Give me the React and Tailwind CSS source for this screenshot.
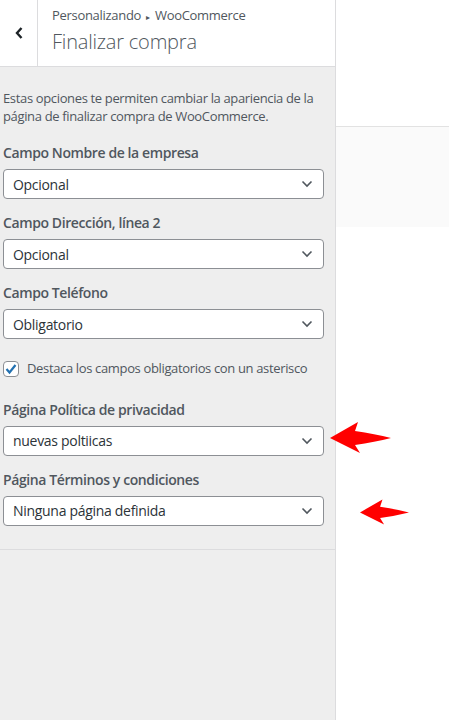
import React from 'react';

function Chevron() {
  return (
    <svg width="12" height="8" viewBox="0 0 12 8" className="shrink-0">
      <path d="M1.5 1.5 L6 6 L10.5 1.5" fill="none" stroke="#50575e" strokeWidth="1.6" />
    </svg>
  );
}

function SelectField({ label, value }) {
  return (
    <div className="flex flex-col">
      <div className="text-[14px] leading-[20px] font-semibold text-[#50575e] tracking-[-0.4px]">{label}</div>
      <div className="mt-[6px] w-[321px] h-[30px] bg-white border border-[#8c8f94] rounded-[4px] flex items-center justify-between pl-[9px] pr-[10px]">
        <span className="text-[14px] text-[#2c3338] tracking-[-0.3px]">{value}</span>
        <Chevron />
      </div>
    </div>
  );
}

function RedArrow({ className }) {
  return (
    <svg viewBox="0 0 61 33" className={className}>
      <path d="M0 17 L28 1 L25 10 Q45 13 61 17 Q45 21 25 24 L30 32 Z" fill="#ff0000" />
    </svg>
  );
}

export default function App() {
  return (
    <div className="relative flex w-[449px] h-[720px] bg-white overflow-hidden" style={{ fontFamily: '"Open Sans", "Noto Sans", sans-serif' }}>
      <aside className="w-[336px] shrink-0 bg-[#eeeeee] border-r border-[#dcdcde] flex flex-col">
        <div className="h-[67px] bg-white border-b border-[#dcdcde] flex">
          <div className="w-[38px] border-r border-[#dcdcde] flex items-center justify-center">
            <svg width="10" height="16" viewBox="0 0 10 16">
              <path d="M7.5 3 L3 8 L7.5 13" fill="none" stroke="#1d2327" strokeWidth="2.4" />
            </svg>
          </div>
          <div className="pl-[14px] pt-[5px]">
            <div className="text-[13px] leading-[20px] text-[#50575e] tracking-[-0.3px]">
              Personalizando <span className="text-[8px] align-middle mx-[2px]">▸</span> WooCommerce
            </div>
            <div className="text-[20px] leading-[28px] font-light text-[#50575e] mt-[1px] tracking-[-0.2px]">Finalizar compra</div>
          </div>
        </div>
        <div className="px-[3px] pt-[22px] flex flex-col">
          <p className="text-[13px] leading-[18px] text-[#50575e] tracking-[-0.35px]">
            Estas opciones te permiten cambiar la apariencia de la página de finalizar compra de WooCommerce.
          </p>
          <div className="mt-[18px] flex flex-col gap-[14px]">
            <SelectField label="Campo Nombre de la empresa" value="Opcional" />
            <SelectField label="Campo Dirección, línea 2" value="Opcional" />
            <SelectField label="Campo Teléfono" value="Obligatorio" />
          </div>
          <label className="mt-[20px] flex items-center gap-[8px]">
            <span className="w-[16px] h-[16px] bg-white border border-[#8c8f94] rounded-[4px] flex items-center justify-center">
              <svg width="14" height="14" viewBox="0 0 14 14">
                <path d="M2.5 7 L5.5 10.5 L11.5 3" fill="none" stroke="#2271b1" strokeWidth="2.2" />
              </svg>
            </span>
            <span className="text-[13px] text-[#50575e] tracking-[-0.35px]">Destaca los campos obligatorios con un asterisco</span>
          </label>
          <div className="mt-[21px] flex flex-col gap-[14px]">
            <SelectField label="Página Política de privacidad" value="nuevas poltiicas" />
            <SelectField label="Página Términos y condiciones" value="Ninguna página definida" />
          </div>
        </div>
        <div className="mt-[23px] border-b border-[#dcdcde]" />
      </aside>
      <main className="flex-1 flex flex-col">
        <div className="h-[127px] bg-white border-b border-[#e2e2e2]" />
        <div className="h-[100px] bg-[#fafafa]" />
        <div className="flex-1 bg-white" />
      </main>
      <RedArrow className="absolute left-[330px] top-[421px] w-[61px] h-[33px]" />
      <RedArrow className="absolute left-[360px] top-[498px] w-[49px] h-[28px]" />
    </div>
  );
}
